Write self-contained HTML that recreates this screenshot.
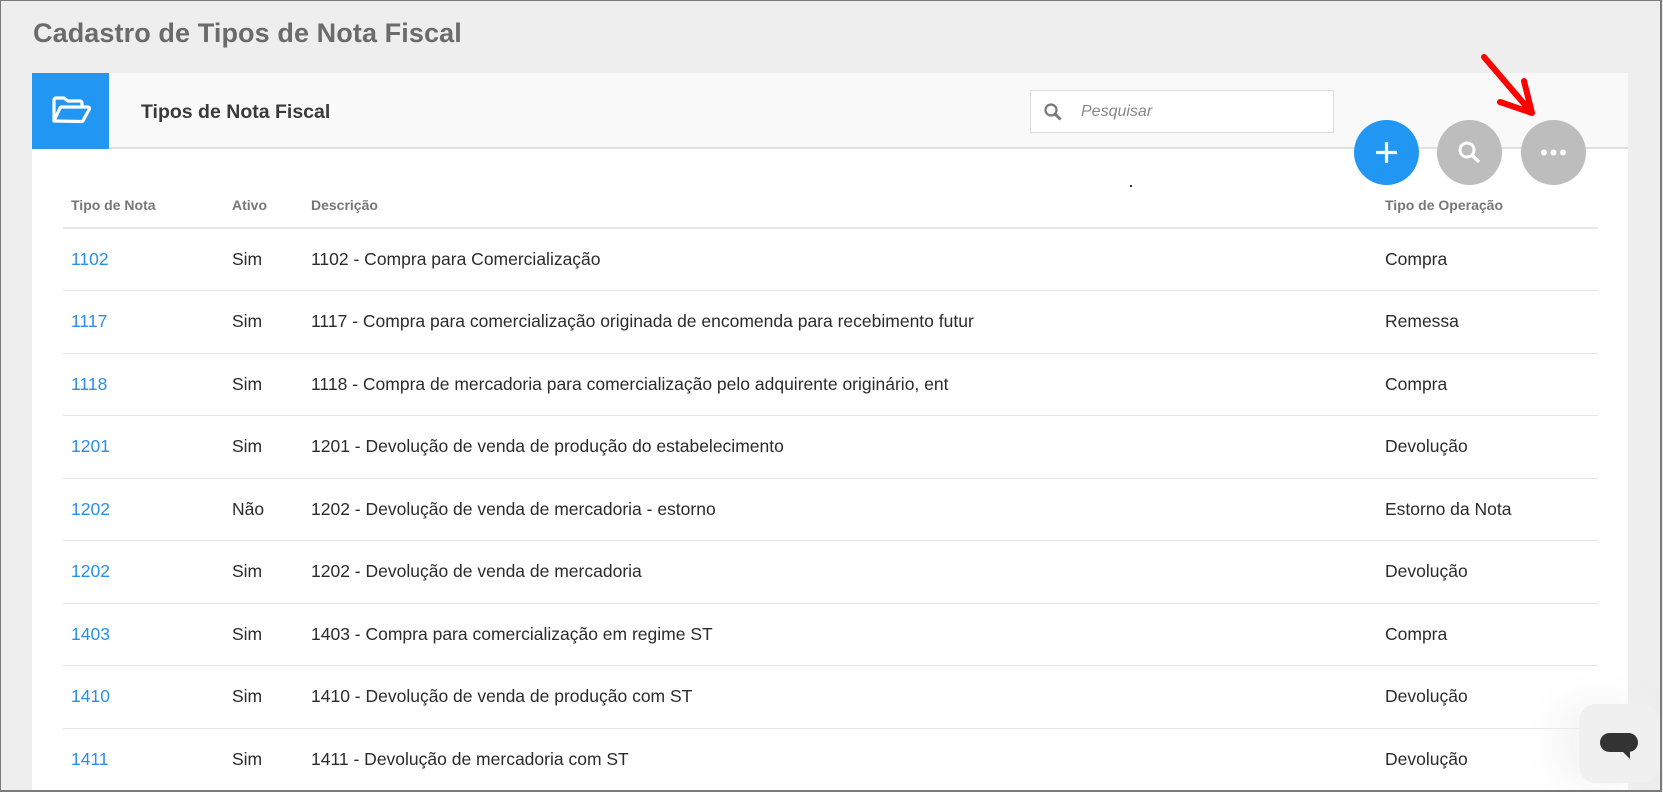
<!DOCTYPE html>
<html><head><meta charset="utf-8"><style>
*{margin:0;padding:0;box-sizing:border-box}
html,body{width:1663px;height:792px;overflow:hidden}
body{background:#eeeeee;font-family:"Liberation Sans",sans-serif;position:relative}
.frame{position:absolute;left:0;top:0;width:1662px;height:792px;border:2px solid #7a7a7a;border-width:1px 2px 2px 1px;pointer-events:none;z-index:10}
h1{position:absolute;left:33px;top:18px;font-size:27px;font-weight:bold;color:#6b6b6b;letter-spacing:0.1px}
.card{position:absolute;left:32px;top:73px;width:1596px;height:719px;background:#fff}
.hdr{position:absolute;left:0;top:0;width:1596px;height:76px;background:#f9f9f9;border-bottom:2px solid #e0e0e0}
.blue{position:absolute;left:0;top:0;width:77px;height:76px;background:#2196f3}
.hdr .t{position:absolute;left:109px;top:28px;font-size:19.5px;font-weight:bold;color:#3a3a3a}
.search{position:absolute;left:998px;top:17px;width:304px;height:43px;background:#fff;border:1px solid #ddd}
.search span{position:absolute;left:50px;top:12px;font-style:italic;color:#888;font-size:16px}
.circ{position:absolute;width:65px;height:65px;border-radius:50%;top:120px}
table{position:absolute;left:31px;top:100px;width:1535px;border-collapse:collapse}
th{font-size:14px;font-weight:bold;color:#777;text-align:left;height:55px;padding-top:10px;border-bottom:2px solid #e8e8e8}
td{font-size:17.5px;color:#2b2b2b;height:62.5px;border-bottom:1px solid #e6e6e6}
td a{color:#2a8fe8}
.c1{padding-left:8px;width:169px}.c2{width:79px}.c3{width:1074px}
.chat{position:absolute;left:1579px;top:704px;width:80px;height:79px;background:#f0f0f0;border-radius:17px;box-shadow:-20px 0 40px rgba(240,240,240,.8)}
</style></head><body>
<h1>Cadastro de Tipos de Nota Fiscal</h1>
<div class="card">
 <div class="hdr">
  <div class="blue"><svg width="77" height="76" viewBox="0 0 77 76"><path d="M22 48 V27 a2 2 0 0 1 2-2 h8 l4 3 h12 a2 2 0 0 1 2 2 v3 M22 48 l6-13 a2 2 0 0 1 2-1 h26 a1.5 1.5 0 0 1 1.4 2 l-6 11 a2 2 0 0 1-2 1.5 z" fill="none" stroke="#fff" stroke-width="3.2" stroke-linejoin="round"/></svg></div>
  <div class="t">Tipos de Nota Fiscal</div>
  <div class="search"><svg style="position:absolute;left:12px;top:11px" width="20" height="20" viewBox="0 0 20 20"><circle cx="8" cy="8" r="5.5" fill="none" stroke="#777" stroke-width="2.2"/><path d="M12 12 L17.5 17.5" stroke="#777" stroke-width="2.8"/></svg><span>Pesquisar</span></div>
 </div>
 <div style="position:absolute;left:1098px;top:112px;width:2px;height:2px;background:#333"></div>
 <table>
  <tr><th class="c1">Tipo de Nota</th><th class="c2">Ativo</th><th class="c3">Descrição</th><th>Tipo de Operação</th></tr>
  <tr><td class="c1"><a>1102</a></td><td>Sim</td><td>1102 - Compra para Comercialização</td><td>Compra</td></tr>
  <tr><td class="c1"><a>1117</a></td><td>Sim</td><td>1117 - Compra para comercialização originada de encomenda para recebimento futur</td><td>Remessa</td></tr>
  <tr><td class="c1"><a>1118</a></td><td>Sim</td><td>1118 - Compra de mercadoria para comercialização pelo adquirente originário, ent</td><td>Compra</td></tr>
  <tr><td class="c1"><a>1201</a></td><td>Sim</td><td>1201 - Devolução de venda de produção do estabelecimento</td><td>Devolução</td></tr>
  <tr><td class="c1"><a>1202</a></td><td>Não</td><td>1202 - Devolução de venda de mercadoria - estorno</td><td>Estorno da Nota</td></tr>
  <tr><td class="c1"><a>1202</a></td><td>Sim</td><td>1202 - Devolução de venda de mercadoria</td><td>Devolução</td></tr>
  <tr><td class="c1"><a>1403</a></td><td>Sim</td><td>1403 - Compra para comercialização em regime ST</td><td>Compra</td></tr>
  <tr><td class="c1"><a>1410</a></td><td>Sim</td><td>1410 - Devolução de venda de produção com ST</td><td>Devolução</td></tr>
  <tr><td class="c1"><a>1411</a></td><td>Sim</td><td>1411 - Devolução de mercadoria com ST</td><td>Devolução</td></tr>
 </table>
</div>
<div class="circ" style="left:1354px;background:#2196f3"><svg width="65" height="65"><path d="M32.5 22 V43 M22 32.5 H43" stroke="#fff" stroke-width="3.2"/></svg></div>
<div class="circ" style="left:1437px;background:#bdbdbd"><svg width="65" height="65"><circle cx="30" cy="30" r="7" fill="none" stroke="#fff" stroke-width="3"/><path d="M35 35 L42 42" stroke="#fff" stroke-width="3.5"/></svg></div>
<div class="circ" style="left:1521px;background:#bdbdbd"><svg width="65" height="65"><circle cx="23" cy="32.5" r="3" fill="#fff"/><circle cx="32.5" cy="32.5" r="3" fill="#fff"/><circle cx="42" cy="32.5" r="3" fill="#fff"/></svg></div>
<svg style="position:absolute;left:0;top:0" width="1663" height="792"><path d="M1484 57 L1532 113 M1500 102 L1532 113 L1524 81" fill="none" stroke="#f00" stroke-width="6" stroke-linecap="round" stroke-linejoin="round"/></svg>
<div class="chat"><div style="position:absolute;left:21px;top:29px;width:38px;height:19px;background:#333;border-radius:10px"></div><div style="position:absolute;left:44px;top:48px;width:0;height:0;border-left:7px solid transparent;border-top:7px solid #333"></div></div>
<div class="frame"></div>
</body></html>
